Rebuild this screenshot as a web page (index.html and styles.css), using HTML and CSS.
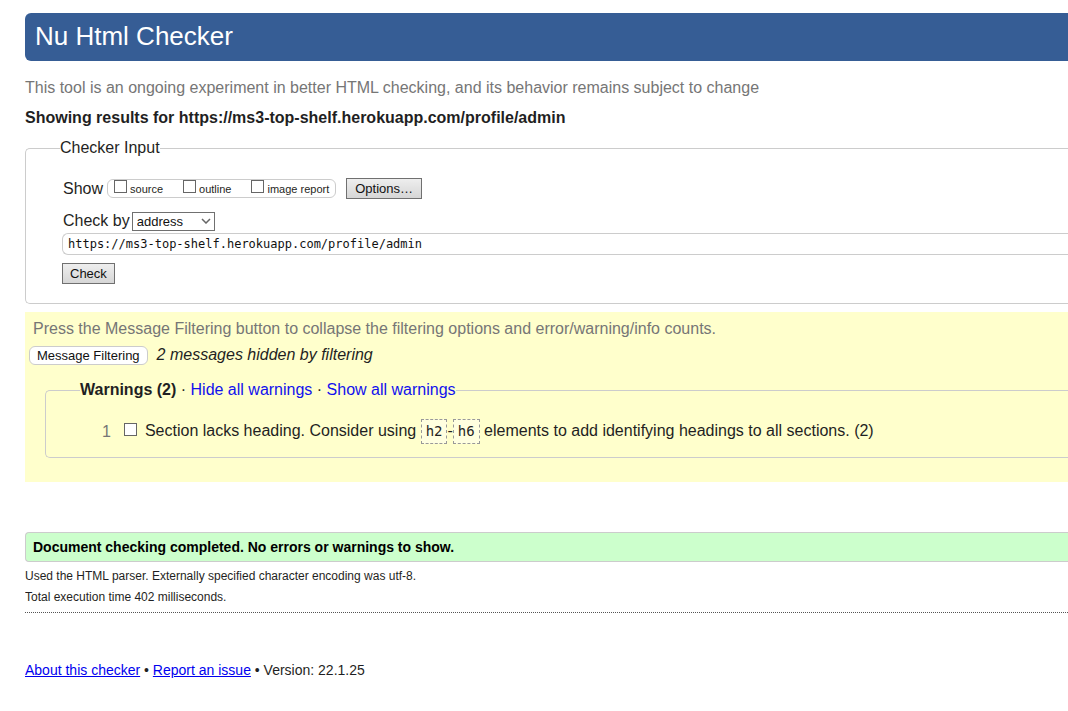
FILE: index.html
```html
<!DOCTYPE html>
<html lang="en">
<head>
<meta charset="utf-8">
<title>Nu Html Checker</title>
<link rel="stylesheet" href="styles.css">
</head>
<body class="page">
<header class="banner"><h1 class="banner-title">Nu Html Checker</h1></header>
<main>
<p class="intro">This tool is an ongoing experiment in better HTML checking, and its behavior remains subject to change</p>
<h2 class="target">Showing results for https://ms3-top-shelf.herokuapp.com/profile/admin</h2>
<form>
<fieldset class="box">
<legend class="legend">Checker Input</legend>
<div class="show-row">
<span>Show</span>
<div class="checks">
<label class="check"><input class="tick" type="checkbox"><span class="check-text">source</span></label>
<label class="check"><input class="tick" type="checkbox"><span class="check-text">outline</span></label>
<label class="check"><input class="tick" type="checkbox"><span class="check-text">image report</span></label>
</div>
<button class="button options" type="button">Options…</button>
</div>
<div class="by-row">
<label for="method">Check by</label>
<span class="select-wrap">
<select class="method" id="method"><option>address</option><option>file upload</option><option>text input</option></select>
<svg class="chevron" width="10" height="6" viewBox="0 0 10 6" aria-hidden="true"><path d="M1 1l4 4 4-4" fill="none" stroke="#666" stroke-width="1.5"/></svg>
</span>
</div>
<input class="address" type="text" aria-label="Address" value="https://ms3-top-shelf.herokuapp.com/profile/admin">
<button class="button" type="button">Check</button>
</fieldset>
</form>
<section class="filters">
<p class="hint">Press the Message Filtering button to collapse the filtering options and error/warning/info counts.</p>
<div class="filter-row">
<button class="toggle" type="button">Message Filtering</button>
<em>2 messages hidden by filtering</em>
</div>
<fieldset class="box warnings">
<legend class="legend"><strong>Warnings (2)</strong> · <a class="plain" href="#hide">Hide all warnings</a> · <a class="plain" href="#show">Show all warnings</a></legend>
<div class="warning">
<span class="number">1</span>
<input class="tick" type="checkbox" id="w1">
<label for="w1">Section lacks heading. Consider using <code class="code">h2</code>-<code class="code">h6</code> elements to add identifying headings to all sections. (2)</label>
</div>
</fieldset>
</section>
<p class="success">Document checking completed. No errors or warnings to show.</p>
<div class="details">
<p class="detail">Used the HTML parser. Externally specified character encoding was utf-8.</p>
<p class="detail">Total execution time 402 milliseconds.</p>
</div>
</main>
<footer class="footer"><a class="link" href="#about">About this checker</a> • <a class="link" href="#issue">Report an issue</a> • Version: 22.1.25</footer>
</body>
</html>
```
FILE: styles.css
```css
* { box-sizing: border-box; }
.page {
  margin: 13px 0 24px 25px;
  background: #fff;
  color: #1f1f23;
  font: 16px/20px "Liberation Sans", Arial, sans-serif;
}
.banner {
  padding: 8px 10px 10px;
  background: #365d95;
  border-radius: 6px 0 0 6px;
}
.banner-title {
  margin: 0;
  color: #fff;
  font-size: 26px;
  font-weight: 400;
  line-height: 30px;
}
.intro { margin: 17px 0 10px; color: #767676; }
.target { margin: 0 0 10px; font-size: 16px; }
.box {
  min-width: 0;
  margin: 0;
  padding: 20px 0 19px 36px;
  border: 1px solid #ccc;
  border-right: 0;
  border-radius: 5px 0 0 5px;
}
.legend { padding: 0; margin-left: -2px; }
.show-row { display: flex; align-items: center; padding-left: 1px; }
.checks {
  display: flex;
  gap: 20px;
  margin: 0 10px 0 4px;
  padding: 0 6px;
  border: 1px solid #ccc;
  border-radius: 6px;
  font-size: 11px;
  line-height: 17px;
}
.check { display: flex; gap: 3px; }
.check-text { padding-top: 1px; line-height: 16px; }
.tick {
  appearance: none;
  width: 13px;
  height: 13px;
  margin: 0;
  border: 1px solid #666;
  background: #fff;
}
.button {
  display: block;
  height: 21px;
  padding: 0 7px;
  border: 1px solid #707070;
  background: linear-gradient(#eee, #d6d6d6);
  color: #111;
  font: 13px/19px "Liberation Sans", Arial, sans-serif;
}
.options { padding: 0 8px; }
.by-row { display: flex; align-items: center; gap: 2px; padding: 12px 0 2px 1px; }
.select-wrap { display: grid; align-items: center; }
.method {
  grid-area: 1 / 1;
  appearance: none;
  width: 83px;
  height: 19px;
  padding: 0 4px;
  border: 1px solid #707070;
  border-radius: 0;
  background: #fff;
  color: #111;
  font: 13px/17px "Liberation Sans", Arial, sans-serif;
}
.chevron { grid-area: 1 / 1; justify-self: end; margin-right: 4px; pointer-events: none; }
.address {
  display: block;
  width: 100%;
  height: 22px;
  margin-bottom: 8px;
  padding: 0 5px;
  border: 1px solid #ccc;
  border-right: 0;
  border-radius: 6px 0 0 6px;
  color: #111;
  font: 12px/20px "DejaVu Sans Mono", monospace;
}
.filters { margin-top: 8px; padding: 7px 0 24px 4px; background: #ffc; }
.hint { margin: 0 0 6px 4px; color: #767676; }
.filter-row { display: flex; align-items: center; gap: 9px; }
.toggle {
  height: 19px;
  padding: 0 7px;
  border: 1px solid #ccc;
  border-radius: 6px;
  background: #fff;
  color: #111;
  font: 13px/17px "Liberation Sans", Arial, sans-serif;
}
.warnings { margin: 15px 0 0 16px; padding: 18px 0 13px 36px; }
.warning { display: flex; align-items: center; padding-left: 20px; line-height: 25px; }
.warning .tick { margin: 0 8px 4px 13px; }
.number { color: #767676; }
.code {
  display: inline-block;
  padding: 0 4px;
  border: 1px dashed #999;
  background: #ffffe0;
  font: 14px/23px "DejaVu Sans Mono", monospace;
}
.success {
  margin: 50px 0 4px;
  padding: 4px 7px;
  border: 1px solid #ccc;
  border-right: 0;
  border-radius: 4px 0 0 4px;
  background: #cfc;
  color: #000;
  font-size: 14px;
  font-weight: 700;
}
.details { padding-bottom: 4px; border-bottom: 1px dotted #555; font-size: 12px; }
.detail { margin: 0; line-height: 21px; }
.footer { margin-top: 47px; font-size: 14px; }
.plain { color: #11e; text-decoration: none; }
.link { color: #00e; }
```
